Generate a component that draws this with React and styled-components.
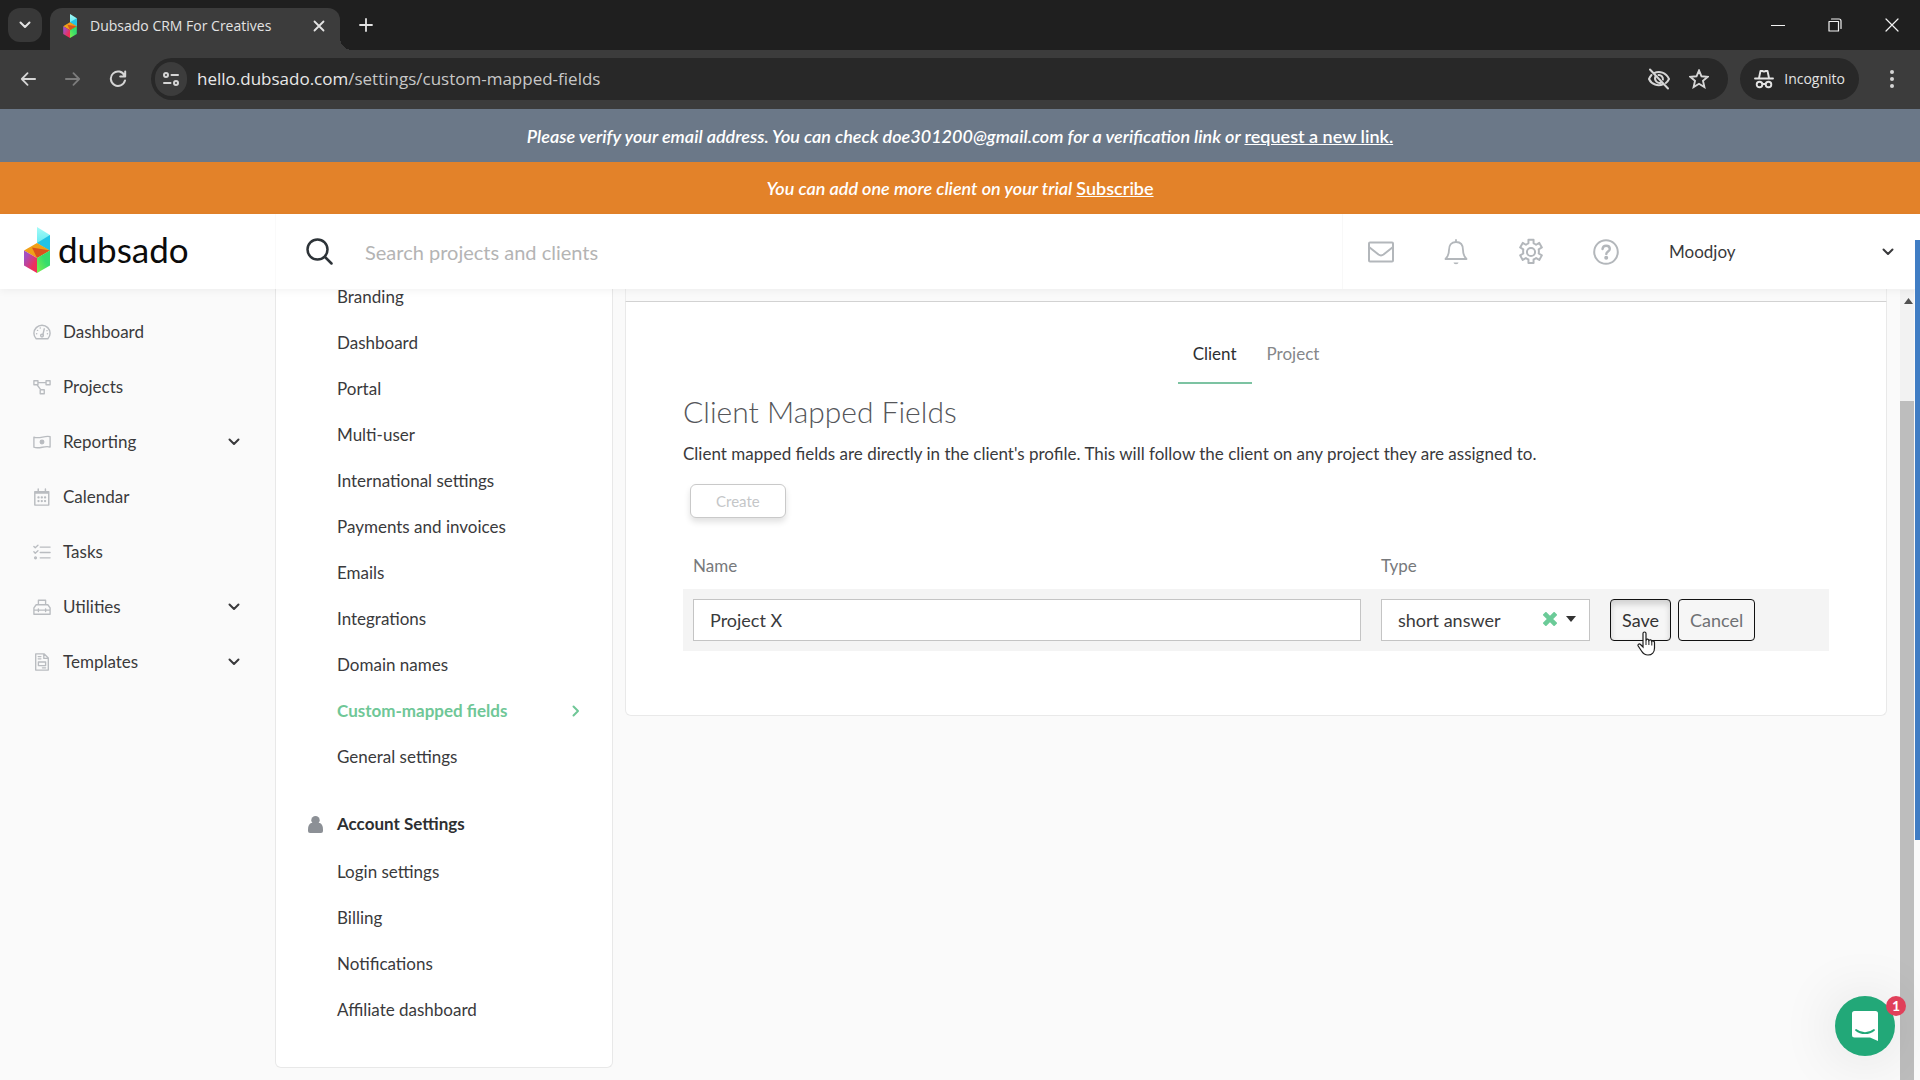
import React, { useState } from "react";
import styled, { createGlobalStyle } from "styled-components";

const GlobalStyle = createGlobalStyle`
  *, *::before, *::after {
    box-sizing: border-box;
  }
  body {
    margin: 0;
    background: #fafafa;
    color: #3a3a3c;
    font-family: Lato, "Liberation Sans", sans-serif;
    font-size: 17px;
    line-height: 22px;
  }
  a {
    color: inherit;
    text-decoration: none;
  }
  button, input, select {
    font: inherit;
    color: inherit;
    margin: 0;
  }
  button {
    padding: 0;
    border: none;
    background: none;
  }
  svg {
    display: block;
    flex: none;
  }
`;

const Window = styled.div`
  position: relative;
  display: flex;
  flex-direction: column;
  height: 100vh;
  overflow: hidden;
`;

/* browser chrome */

const TabStrip = styled.div`
  display: flex;
  align-items: flex-end;
  height: 50px;
  padding-left: 8px;
  background: #1f1f1f;
  color: #e3e3e3;
  font-family: "Open Sans", sans-serif;
  font-size: 14px;
`;

const TabSearch = styled.button`
  display: grid;
  place-items: center;
  width: 34px;
  height: 34px;
  margin: 0 8px 8px 0;
  border-radius: 12px;
  background: #383838;
`;

const Tab = styled.div`
  position: relative;
  display: flex;
  align-items: center;
  gap: 12px;
  width: 290px;
  height: 42px;
  padding: 0 12px 6px;
  border-radius: 12px 12px 0 0;
  background: #3c3c3c;

  &::after {
    content: "";
    position: absolute;
    right: -12px;
    bottom: 0;
    width: 12px;
    height: 12px;
    background: radial-gradient(circle at 100% 0, transparent 12px, #3c3c3c 12px);
  }
`;

const TabTitle = styled.span`
  flex: 1;
  white-space: nowrap;
`;

const TabButton = styled.button`
  display: grid;
  place-items: center;
  width: 18px;
  height: 18px;
`;

const NewTab = styled(TabButton)`
  margin: 0 0 16px 17px;
`;

const WindowButtons = styled.div`
  display: flex;
  align-self: center;
  margin-left: auto;
`;

const WindowButton = styled.button`
  display: grid;
  place-items: center;
  width: 57px;
  height: 48px;
  color: #f2f2f2;
`;

const Toolbar = styled.div`
  display: flex;
  align-items: center;
  gap: 21px;
  height: 59px;
  padding: 0 16px 2px;
  background: #3c3c3c;
  color: #d5d5d5;
  font-family: "Open Sans", sans-serif;
`;

const ToolButton = styled.button`
  display: grid;
  place-items: center;
  width: 24px;
  height: 24px;
  color: ${props => (props.$muted ? "#7c7c7c" : "#d5d5d5")};
`;

const AddressBar = styled.div`
  display: flex;
  align-items: center;
  flex: 1;
  gap: 18px;
  height: 42px;
  padding: 0 19px 0 4px;
  border-radius: 21px;
  background: #282828;
`;

const SiteInfo = styled.button`
  display: grid;
  place-items: center;
  width: 32px;
  height: 34px;
  border-radius: 17px;
  background: #3c3c3c;
`;

const Url = styled.div`
  flex: 1;
  margin-left: -8px;
  color: #c7c7c7;
  font-size: 17px;

  span {
    color: #e8e8e8;
  }
`;

const IncognitoChip = styled.div`
  display: flex;
  align-items: center;
  gap: 10px;
  height: 42px;
  margin-left: -9px;
  padding: 0 14px;
  border-radius: 21px;
  background: #282828;
  color: #e3e3e3;
  font-size: 14px;
`;

/* notices */

const Notice = styled.div`
  display: flex;
  align-items: center;
  justify-content: center;
  height: ${props => (props.$warning ? "52px" : "53px")};
  background: ${props => (props.$warning ? "#e38229" : "#6b7888")};
  color: #fff;
  font-size: 18px;
  font-weight: 600;
  font-style: italic;
  white-space: pre;

  a {
    font-style: normal;
    text-decoration: underline;
  }
`;

/* app header */

const Header = styled.header`
  position: relative;
  z-index: 1;
  display: flex;
  flex: none;
  height: 75px;
  background: #fff;
  box-shadow: 0 2px 8px rgba(0, 0, 0, 0.05);
`;

const Brand = styled.a`
  display: flex;
  align-items: center;
  gap: 8px;
  width: 276px;
  padding: 0 0 3px 24px;
  border-right: 1px solid #fafafa;
  color: #0b0b0b;
  font-size: 35px;
  line-height: 40px;

  span {
    padding-bottom: 3px;
  }
`;

const SearchBox = styled.label`
  display: flex;
  align-items: center;
  flex: 1;
  gap: 32px;
  padding-left: 30px;
  border-right: 1px solid #f8f8f8;
  color: #2d3338;
`;

const SearchInput = styled.input`
  flex: 1;
  padding: 0;
  border: none;
  outline: none;
  font-size: 20px;
  line-height: 26px;

  &::placeholder {
    color: #b4b4b4;
    opacity: 1;
  }
`;

const HeaderIcons = styled.div`
  display: flex;
  align-items: center;
  color: #b3b7bb;
`;

const HeaderIcon = styled.button`
  display: grid;
  place-items: center;
  width: 75px;
  height: 60px;
`;

const AccountMenu = styled.button`
  display: flex;
  align-items: center;
  justify-content: space-between;
  width: 277px;
  padding: 0 26px;
  text-align: left;
`;

/* page */

const Body = styled.div`
  display: flex;
  flex: 1;
  min-height: 0;
  padding-right: 20px;
  overflow: hidden;
`;

const Sidebar = styled.nav`
  flex: none;
  width: 275px;
  padding-top: 15px;
`;

const SideLink = styled.a`
  display: flex;
  align-items: center;
  gap: 12px;
  height: 55px;
  padding: 0 35px 0 33px;

  > svg:first-child {
    color: #b9bcc0;
  }
`;

const SideLabel = styled.span`
  flex: 1;
`;

const SettingsMenu = styled.nav`
  flex: none;
  align-self: flex-start;
  width: 338px;
  margin-top: -15px;
  padding: 0 32px 34px;
  border: 1px solid #e8e8e8;
  border-top: none;
  border-radius: 6px;
  background: #fff;
`;

const MenuLink = styled.a`
  display: flex;
  align-items: center;
  justify-content: space-between;
  height: 46px;
  padding-left: 29px;
  color: ${props => (props.$active ? "#6fc797" : "#3a3a3c")};
  font-weight: ${props => (props.$active ? 700 : 400)};
  line-height: 16px;
`;

const MenuHeading = styled.h2`
  display: flex;
  align-items: center;
  gap: 14px;
  height: 50px;
  margin: 19px 0 0;
  color: #2d2f31;
  font-size: 17px;
  font-weight: 700;

  svg {
    color: #8c9096;
  }
`;

const Content = styled.main`
  flex: 1;
  min-width: 0;
  padding: 0 13px 0 12px;
`;

const CardTop = styled.div`
  height: 12px;
  border: solid #ececec;
  border-width: 0 1px;
`;

const Card = styled.section`
  padding: 24px 57px 64px;
  border: 1px solid #e9e9e9;
  border-top-color: #d2d2d2;
  border-radius: 0 0 6px 6px;
  background: #fff;
`;

const Tabs = styled.div`
  display: flex;
  justify-content: center;
`;

const TabItem = styled.button`
  height: 58px;
  padding: 0 15px;
  border-bottom: 2px solid ${props => (props.$active ? "#7cc3a2" : "transparent")};
  color: ${props => (props.$active ? "#2d2f31" : "#85878a")};
`;

const Title = styled.h1`
  margin: 9px 0 0;
  color: #55565a;
  font-size: 30px;
  font-weight: 300;
  line-height: 36px;
`;

const Intro = styled.p`
  margin: 14px 0 19px;
`;

const CreateButton = styled.button`
  height: 34px;
  margin-left: 7px;
  padding: 0 25px;
  border: 1px solid #c9c9c9;
  border-radius: 6px;
  background: #fff;
  box-shadow: 0 4px 6px rgba(0, 0, 0, 0.12);
  color: #c4c6c8;
  font-size: 15px;
`;

const FieldTable = styled.table`
  width: 100%;
  margin-top: 25px;
  border-collapse: collapse;
  table-layout: fixed;

  th {
    height: 46px;
    padding: 0 10px;
    color: #77797c;
    font-weight: 400;
    text-align: left;
  }
  td {
    height: 62px;
    padding: 0 10px;
    background: #f4f4f4;
  }
`;

const NarrowColumn = styled.col`
  width: 229px;
`;

const NameInput = styled.input`
  display: block;
  width: 100%;
  height: 42px;
  padding: 0 16px;
  border: 1px solid #c4c4c4;
  background: #fff;
  font-size: 18px;
  outline: none;
`;

const SelectBox = styled.div`
  position: relative;
`;

const TypeSelect = styled.select`
  display: block;
  width: 100%;
  height: 42px;
  padding: 0 16px;
  border: 1px solid #c4c4c4;
  border-radius: 0;
  background: #fff;
  font-size: 18px;
  outline: none;
  appearance: none;
`;

const SelectMarks = styled.div`
  position: absolute;
  top: 0;
  right: 14px;
  display: flex;
  align-items: center;
  gap: 9px;
  height: 40px;
`;

const ClearButton = styled.button`
  color: #6bcb98;
`;

const RowActions = styled.div`
  display: flex;
  gap: 7px;
`;

const ActionButton = styled.button`
  position: relative;
  height: 42px;
  padding: 0 11px;
  border: 1px solid #111;
  border-radius: 4px;
  background: #f6f6f6;
  color: #6f7174;
  font-size: 18px;
  ${props =>
    props.$pressed &&
    "color: #333; box-shadow: inset 0 4px 6px rgba(0, 0, 0, 0.16);"}
`;

const Pointer = styled.svg`
  position: absolute;
  top: 31px;
  left: 26px;
`;

/* right edge */

const ScrollTrack = styled.div`
  position: absolute;
  right: 6px;
  top: 290px;
  bottom: 0;
  display: flex;
  flex-direction: column;
  align-items: center;
  width: 14px;
  background: #f2f2f2;

  svg {
    margin: 8px 0 0 2px;
  }
`;

const ScrollThumb = styled.div`
  flex: 1;
  width: 100%;
  margin-top: 97px;
  background: #bdbdbd;
`;

const EdgeStrip = styled.div`
  position: absolute;
  z-index: 2;
  right: 0;
  top: 240px;
  width: 5px;
  height: 600px;
  background: #407dc4;
`;

const ChatButton = styled.button`
  position: absolute;
  z-index: 2;
  right: 25px;
  bottom: 24px;
  display: grid;
  place-items: center;
  width: 60px;
  height: 60px;
  border-radius: 50%;
  background: #22a878;
  box-shadow: 0 2px 60px rgba(0, 0, 0, 0.12);
`;

const ChatBadge = styled.span`
  position: absolute;
  top: 0;
  right: -11px;
  width: 20px;
  height: 20px;
  border-radius: 50%;
  background: #e0405a;
  color: #fff;
  font-size: 14px;
  font-weight: 700;
  line-height: 20px;
  text-align: center;
`;

const Line = ({ w = 20, h = w, box = "0 0 20 20", sw = 1.5, children }) => (
  <svg
    width={w}
    height={h}
    viewBox={box}
    fill="none"
    stroke="currentColor"
    strokeWidth={sw}
    strokeLinecap="round"
    strokeLinejoin="round"
    aria-hidden="true"
  >
    {children}
  </svg>
);

const Chevron = () => (
  <Line w={12} h={8} box="0 0 12 8" sw={2}>
    <path d="M1.5 1.5 6 6l4.5-4.5" />
  </Line>
);

const Cube = ({ width, height }) => (
  <svg width={width} height={height} viewBox="0 0 26 46" aria-hidden="true">
    <defs>
      <linearGradient id="sky" x1="0" y1="0" x2="0" y2="1">
        <stop offset="0" stopColor="#a5fbf8" />
        <stop offset="1" stopColor="#4be3ee" />
      </linearGradient>
      <linearGradient id="plum" x1="0" y1="0" x2="1" y2="1">
        <stop offset="0.2" stopColor="#a44fc0" />
        <stop offset="0.7" stopColor="#ee2f5c" />
      </linearGradient>
      <linearGradient id="leaf" x1="0" y1="1" x2="1" y2="0">
        <stop offset="0" stopColor="#7ff04a" />
        <stop offset="0.6" stopColor="#35dc6c" />
      </linearGradient>
    </defs>
    <path d="M13 0 26 8v16l-13-8z" fill="url(#sky)" />
    <path d="M13 16 26 8v16z" fill="#22c3e6" />
    <path d="M0 23.5 13 16l13 7.500L13 31z" fill="#f0a018" />
    <path d="M26 23.5 13 31l-5-10.500z" fill="#da531c" />
    <path d="M0 23.5 13 31v15L0 38.5z" fill="url(#plum)" />
    <path d="M26 23.5 13 31v15l13-7.500z" fill="url(#leaf)" />
  </svg>
);

const sideIcons = {
  Dashboard: (
    <Line w={18} sw={1.6}>
      <path d="M3.5 17.500h13C18 16 19 14 19 11.500a9 9 0 0 0-18 0c0 2.500 1 4.500 2.500 6z" />
      <path d="M12.500 6.500 11 13M5 8.200h.1M4 12h.1M8 5.500h.1M15.500 8.500h.1M16 12h.1" />
      <circle cx="10" cy="14" r="1.500" />
    </Line>
  ),
  Projects: (
    <Line w={18} sw={1.5}>
      <path d="M1 3h4.500v4.500H1zM14.500 3H19v4.500h-4.500zM8 13h4.500v4.500H8zM5.500 5.200h9M4.500 7.500l4 5.500" />
    </Line>
  ),
  Reporting: (
    <Line w={18} sw={1.5}>
      <path d="M1 4.500c6 2.500 12-2 18-.4v11.500c-6-2-12 2.600-18 .2z" />
      <circle cx="10" cy="10" r="2" fill="currentColor" />
    </Line>
  ),
  Calendar: (
    <Line w={18} sw={1.6}>
      <path d="M2 4h15.500v15H2zM2 5.500h15.500M5.800 1.200V4M13.800 1.200V4" />
      <path
        d="M6 10.500h.2M9.700 10.500h.2M13.300 10.500h.2M6 14.500h.2M9.700 14.500h.2M13.300 14.500h.2"
        strokeWidth="2.400"
      />
    </Line>
  ),
  Tasks: (
    <Line w={18} sw={1.5}>
      <path d="m1 3.800 1.500 1.500L5.500 2.500M1 9.800l1.500 1.500 3-2.800M8 4.500h11M8 10.500h11M8 16.500h11" />
      <circle cx="2.800" cy="16.500" r="1" />
    </Line>
  ),
  Utilities: (
    <Line w={18} sw={1.5}>
      <path d="M1 18V11l2.500-3.500h13L19 11v7zM6 7.500V2.500h8v5M1 13.500h18M6 12v3M14 12v3" />
    </Line>
  ),
  Templates: (
    <Line w={18} sw={1.5}>
      <path d="M3 1h9.500L17 5.500V19H3zM12 1v5h5M5.800 4h3M5.800 6.500h3M6 10h8v4H6zM10.500 16.500H14" />
    </Line>
  )
};

const sideItems = [
  { label: "Dashboard" },
  { label: "Projects" },
  { label: "Reporting", expandable: true },
  { label: "Calendar" },
  { label: "Tasks" },
  { label: "Utilities", expandable: true },
  { label: "Templates", expandable: true }
];

const brandItems = [
  "Branding",
  "Dashboard",
  "Portal",
  "Multi-user",
  "International settings",
  "Payments and invoices",
  "Emails",
  "Integrations",
  "Domain names",
  "Custom-mapped fields",
  "General settings"
];

const accountItems = [
  "Login settings",
  "Billing",
  "Notifications",
  "Affiliate dashboard"
];

const BrowserChrome = () => (
  <>
    <TabStrip>
      <TabSearch aria-label="Search tabs">
        <Chevron />
      </TabSearch>
      <Tab>
        <Cube width={16} height={24} />
        <TabTitle>Dubsado CRM For Creatives</TabTitle>
        <TabButton aria-label="Close tab">
          <Line w={12} box="0 0 12 12" sw={1.8}>
            <path d="m1.5 1.5 9 9M10.5 1.5l-9 9" />
          </Line>
        </TabButton>
      </Tab>
      <NewTab aria-label="New tab">
        <Line w={14} box="0 0 14 14" sw={1.8}>
          <path d="M7 1v12M1 7h12" />
        </Line>
      </NewTab>
      <WindowButtons>
        <WindowButton aria-label="Minimize">
          <Line w={14} box="0 0 14 14" sw={1.2}>
            <path d="M.5 7.500h13" />
          </Line>
        </WindowButton>
        <WindowButton aria-label="Restore">
          <Line w={14} box="0 0 14 14" sw={1.2}>
            <path d="M1 3.500h9.500V13H1zM3.500 1H11a2 2 0 0 1 2 2v7.500" />
          </Line>
        </WindowButton>
        <WindowButton aria-label="Close">
          <Line w={14} box="0 0 14 14" sw={1.2}>
            <path d="m1 1 12 12M13 1 1 13" />
          </Line>
        </WindowButton>
      </WindowButtons>
    </TabStrip>
    <Toolbar>
      <ToolButton aria-label="Back">
        <Line w={16} box="0 0 18 18" sw={2}>
          <path d="M17 9H2M8.500 2.500 2 9l6.500 6.500" />
        </Line>
      </ToolButton>
      <ToolButton aria-label="Forward" $muted>
        <Line w={16} box="0 0 18 18" sw={2}>
          <path d="M1 9h15M9.500 2.500 16 9l-6.500 6.500" />
        </Line>
      </ToolButton>
      <ToolButton aria-label="Reload">
        <Line w={18} box="0 0 18 18" sw={2}>
          <path d="M15.500 5.500A7.200 7.200 0 1 0 16 10.500M16.200 1.500v5h-5" />
        </Line>
      </ToolButton>
      <AddressBar>
        <SiteInfo aria-label="View site information">
          <Line w={18} h={16} box="0 0 18 16" sw={2}>
            <circle cx="4" cy="4" r="2" />
            <circle cx="14" cy="12" r="2" />
            <path d="M9.500 4H16M2 12h6.500" />
          </Line>
        </SiteInfo>
        <Url>
          <span>hello.dubsado.com</span>/settings/custom-mapped-fields
        </Url>
        <Line w={24} box="0 0 24 24" sw={2}>
          <path d="M7 6.200c5.500-2.800 12-.7 15 5.800-.8 1.700-1.900 3-3.200 4M4.500 8Q3 9.700 2 12c2.500 5.500 9 7.500 14 5.300M3 2.500l18 19" />
          <path d="M8.500 9.500a4.500 4.500 0 0 0 6 6M11.500 8a4 4 0 0 1 4.400 4.500" />
        </Line>
        <Line w={20} box="0 0 20 20" sw={1.9}>
          <path
            d="m10 1.500 2.500 5.800 6.200.5-4.700 4.100 1.400 6.200L10 14.800l-5.400 3.300L6 11.900 1.300 7.800l6.200-.5z"
            strokeLinejoin="miter"
          />
        </Line>
      </AddressBar>
      <IncognitoChip>
        <Line w={20} box="0 0 20 20" sw={1.9}>
          <path d="M1 9.500h18M5 9 6.500 2h1.800l1.700.6 1.700-.6h1.800L15 9M9 15h2" />
          <circle cx="5.500" cy="15.500" r="2.800" />
          <circle cx="14.500" cy="15.500" r="2.800" />
        </Line>
        Incognito
      </IncognitoChip>
      <ToolButton aria-label="Browser menu">
        <svg width="6" height="20" viewBox="0 0 6 20" fill="currentColor">
          <circle cx="3" cy="3" r="2" />
          <circle cx="3" cy="10" r="2" />
          <circle cx="3" cy="17" r="2" />
        </svg>
      </ToolButton>
    </Toolbar>
  </>
);

const AppHeader = () => (
  <Header>
    <Brand href="#home">
      <Cube width={26} height={46} />
      <span>dubsado</span>
    </Brand>
    <SearchBox>
      <Line w={27} box="0 0 27 27" sw={2.5}>
        <circle cx="11.500" cy="11.500" r="10" />
        <path d="m19 19 6.500 6.500" />
      </Line>
      <SearchInput
        aria-label="Search projects and clients"
        placeholder="Search projects and clients"
      />
    </SearchBox>
    <HeaderIcons>
      <HeaderIcon aria-label="Messages">
        <Line w={26} h={22} box="0 0 26 22" sw={2}>
          <rect x="1" y="1.500" width="24" height="19" rx="1" />
          <path d="m1 6 9.500 7.500q2.500 1.800 5 0L25 6" />
        </Line>
      </HeaderIcon>
      <HeaderIcon aria-label="Notifications">
        <Line w={24} h={28} box="0 0 24 26" sw={1.8}>
          <path d="M12 3c-5 0-7 3.500-7 8 0 5-1.500 7-3.500 9h21c-2-2-3.500-4-3.500-9 0-4.500-2-8-7-8zM12 1v2" />
          <path
            d="M9.500 23.500h5a2.500 1.800 0 0 1-5 0z"
            fill="currentColor"
            stroke="none"
          />
        </Line>
      </HeaderIcon>
      <HeaderIcon aria-label="Settings">
        <Line w={28} box="0 0 24 24" sw={1.7}>
          <path d="M9.800 1.500h4.400v3.100q1.200.4 2.200 1.200l2.700-1.600 2.200 3.900-2.700 1.600q.3 1.800 0 3.600l2.700 1.600-2.200 3.900-2.700-1.600q-1 .8-2.200 1.200v3.100H9.800v-3.100q-1.200-.4-2.200-1.200l-2.700 1.600-2.200-3.900 2.700-1.600q-.3-1.800 0-3.600L2.700 8.100l2.200-3.900 2.700 1.600q1-.8 2.200-1.200z" />
          <circle cx="12" cy="12" r="3.500" />
        </Line>
      </HeaderIcon>
      <HeaderIcon aria-label="Help">
        <Line w={26} box="0 0 26 26" sw={2}>
          <circle cx="13" cy="13" r="11.800" />
          <path
            d="M9.500 10c.3-2 1.700-3.200 3.600-3.200 2 0 3.700 1.200 3.700 3.100 0 2.500-3.500 2.600-3.500 5"
            strokeWidth="2.400"
          />
          <circle cx="13.200" cy="18.800" r="1" fill="currentColor" />
        </Line>
      </HeaderIcon>
    </HeaderIcons>
    <AccountMenu>
      Moodjoy
      <Chevron />
    </AccountMenu>
  </Header>
);

const FieldRow = () => {
  const [name, setName] = useState("Project X");
  const [type, setType] = useState("short");

  return (
    <tr>
      <td>
        <NameInput
          aria-labelledby="col-name"
          value={name}
          onChange={e => setName(e.target.value)}
        />
      </td>
      <td>
        <SelectBox>
          <TypeSelect
            aria-labelledby="col-type"
            value={type}
            onChange={e => setType(e.target.value)}
          >
            <option value="" />
            <option value="short">short answer</option>
          </TypeSelect>
          <SelectMarks>
            <ClearButton aria-label="Clear type" onClick={() => setType("")}>
              <Line w={14} box="1 1 11 11" sw={3.6}>
                <path
                  d="m2 2 9 9M11 2l-9 9"
                  strokeLinecap="butt"
                />
              </Line>
            </ClearButton>
            <svg width="10" height="6" viewBox="0 0 10 6" aria-hidden="true">
              <path d="M0 0h10L5 6z" fill="#333" />
            </svg>
          </SelectMarks>
        </SelectBox>
      </td>
      <td>
        <RowActions>
          <ActionButton $pressed>
            Save
            <Pointer width="19" height="25" viewBox="0 0 19 25">
              <path
                d="M6 2.500C6 .5 9 .5 9 2.500V10l.2-1c.6-1.300 2.600-1 2.600.6l.3-.2c.8-1 2.600-.6 2.600 1l.3-.2c1-.7 2.500 0 2.500 1.500V17c0 4-2.500 7-6.500 7-3.500 0-5-1.500-6.500-4L1.200 15c-.8-1.500 1-2.800 2.300-1.500L6 16z"
                fill="#fff"
                stroke="#1c1c1c"
                strokeWidth="1.200"
              />
              <path d="M9 10v4M11.900 10v4M14.800 11v3.500" stroke="#1c1c1c" />
            </Pointer>
          </ActionButton>
          <ActionButton>Cancel</ActionButton>
        </RowActions>
      </td>
    </tr>
  );
};

export default function App() {
  const [tab, setTab] = useState("Client");

  return (
    <Window>
      <GlobalStyle />
      <BrowserChrome />
      <Notice>
        {"Please verify your email address. You can check doe301200@gmail.com for a verification link or "}
        <a href="#verify">request a new link.</a>
      </Notice>
      <Notice $warning>
        {"You can add one more client on your trial "}
        <a href="#subscribe">Subscribe</a>
      </Notice>
      <AppHeader />
      <Body>
        <Sidebar>
          {sideItems.map(item => (
            <SideLink key={item.label} href="#side">
              {sideIcons[item.label]}
              <SideLabel>{item.label}</SideLabel>
              {item.expandable && <Chevron />}
            </SideLink>
          ))}
        </Sidebar>
        <SettingsMenu>
          {brandItems.map(label => (
            <MenuLink
              key={label}
              href="#settings"
              $active={label === "Custom-mapped fields"}
            >
              {label}
              {label === "Custom-mapped fields" && (
                <Line w={8} h={12} box="0 0 8 12" sw={2}>
                  <path d="M1.5 1.5 6 6l-4.500 4.500" />
                </Line>
              )}
            </MenuLink>
          ))}
          <MenuHeading>
            <svg width="15" height="17" viewBox="0 0 15 17" fill="currentColor">
              <circle cx="7.500" cy="4.200" r="4.200" />
              <path d="M3 7h9c2 1 3 3.500 3 6.500V15a2 2 0 0 1-2 2H2a2 2 0 0 1-2-2v-1.500C0 10.500 1 8 3 7z" />
            </svg>
            Account Settings
          </MenuHeading>
          {accountItems.map(label => (
            <MenuLink key={label} href="#account">
              {label}
            </MenuLink>
          ))}
        </SettingsMenu>
        <Content>
          <CardTop />
          <Card>
            <Tabs>
              {["Client", "Project"].map(label => (
                <TabItem
                  key={label}
                  $active={tab === label}
                  onClick={() => setTab(label)}
                >
                  {label}
                </TabItem>
              ))}
            </Tabs>
            <Title>Client Mapped Fields</Title>
            <Intro>
              Client mapped fields are directly in the client's profile. This
              will follow the client on any project they are assigned to.
            </Intro>
            <CreateButton>Create</CreateButton>
            <FieldTable>
              <colgroup>
                <col />
                <NarrowColumn />
                <NarrowColumn />
              </colgroup>
              <thead>
                <tr>
                  <th id="col-name">Name</th>
                  <th id="col-type">Type</th>
                  <th aria-label="Actions" />
                </tr>
              </thead>
              <tbody>
                <FieldRow />
              </tbody>
            </FieldTable>
          </Card>
        </Content>
      </Body>
      <ScrollTrack>
        <svg width="9" height="6" viewBox="0 0 9 6">
          <path d="M0 6h9L4.500 0z" fill="#505050" />
        </svg>
        <ScrollThumb />
      </ScrollTrack>
      <EdgeStrip />
      <ChatButton aria-label="Open chat">
        <svg width="28" height="32" viewBox="0 0 28 32" aria-hidden="true">
          <path
            d="M3.500 1h21A2.500 2.500 0 0 1 27 3.500V31l-8-3.500H3.500A2.500 2.500 0 0 1 1 25V3.500A2.500 2.500 0 0 1 3.500 1z"
            fill="#fff"
          />
          <path
            d="M5 20c5 4.200 13 4.200 18 0"
            fill="none"
            stroke="#22a878"
            strokeWidth="1.800"
            strokeLinecap="round"
          />
        </svg>
        <ChatBadge>1</ChatBadge>
      </ChatButton>
    </Window>
  );
}
